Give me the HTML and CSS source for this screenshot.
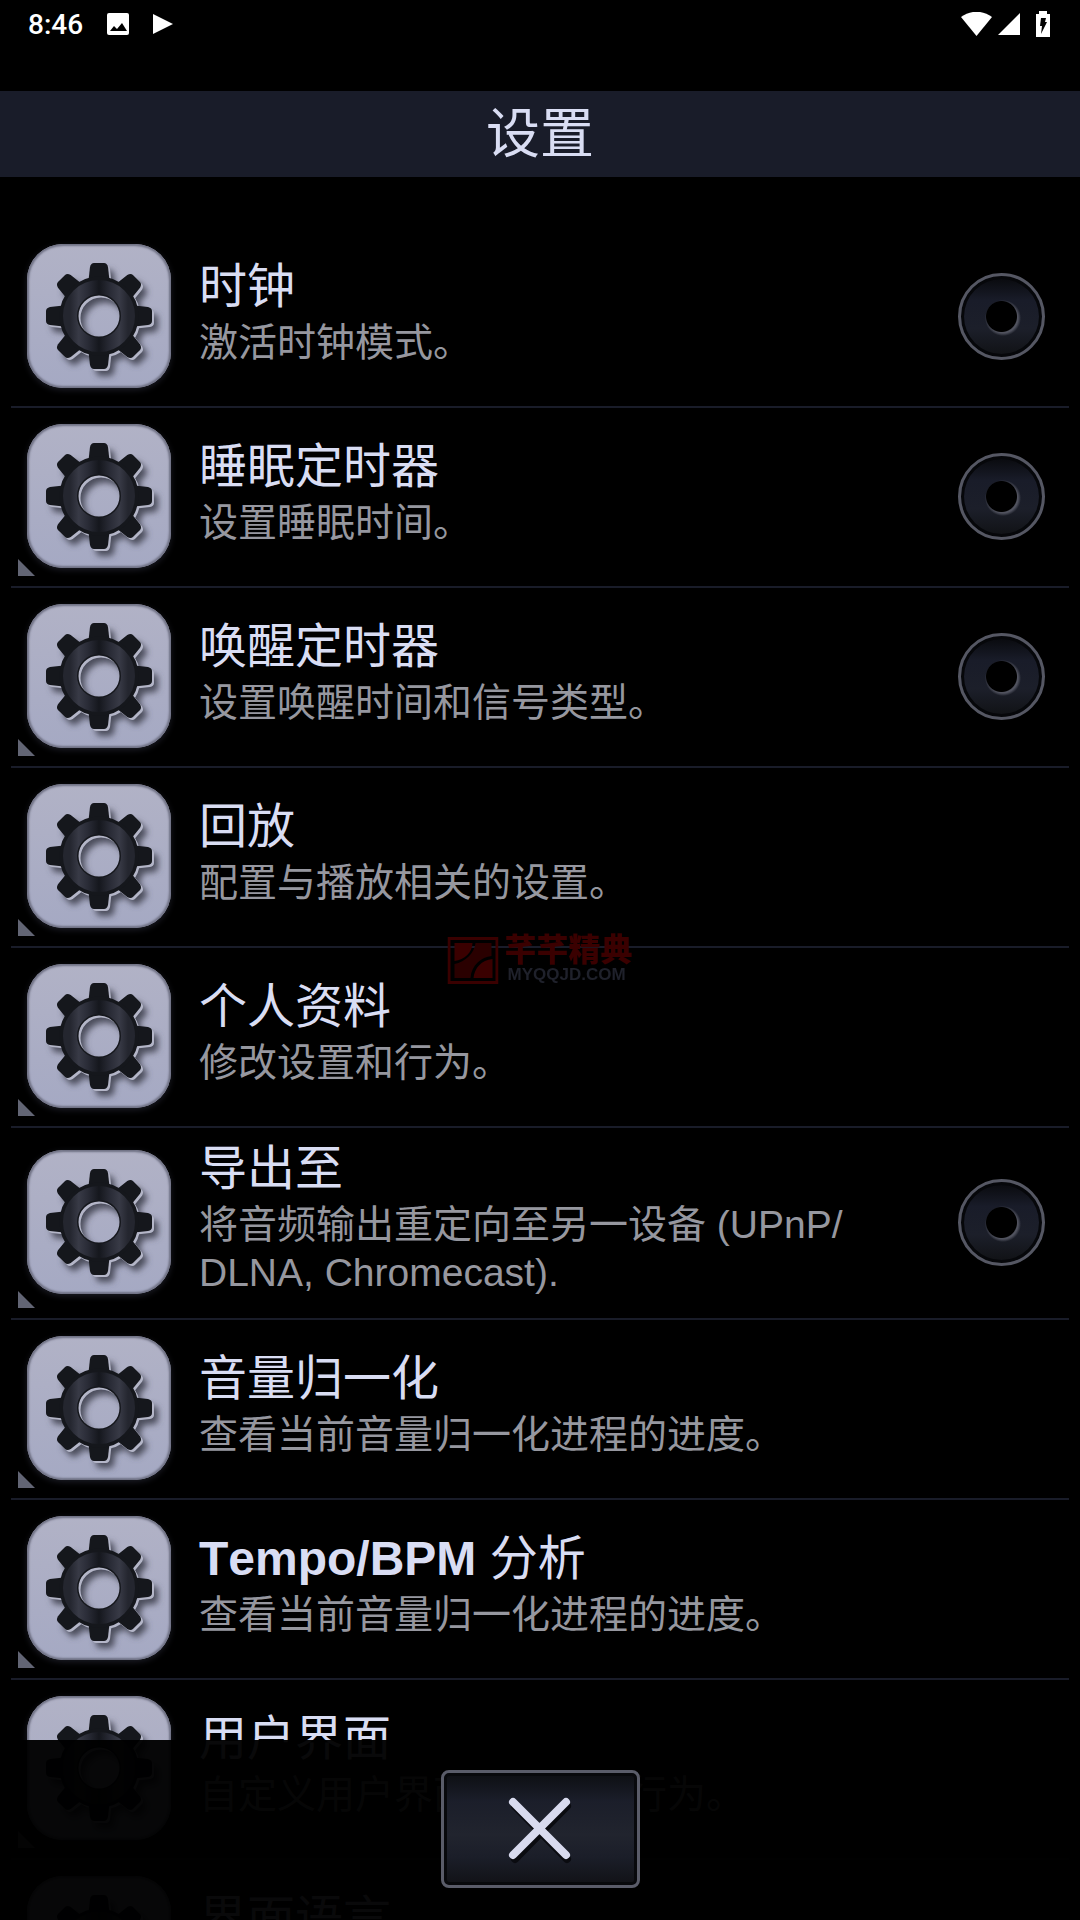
FILE: index.html
```html
<!DOCTYPE html>
<html lang="zh-CN">
<head>
    <meta charset="UTF-8">
    <meta name="viewport" content="width=device-width, initial-scale=1.0">
    <title>设置</title>
    <link rel="stylesheet" href="styles.css">
</head>
<body>

<!-- shared gear icon -->
<svg class="defs" width="0" height="0" aria-hidden="true">
    <defs>
        <linearGradient id="ring" x1="0" y1="0" x2="1" y2="0">
            <stop offset="0" stop-color="#24262f"/>
            <stop offset="0.15" stop-color="#383a46"/>
            <stop offset="0.3" stop-color="#2a2c37"/>
            <stop offset="0.5" stop-color="#15171d"/>
            <stop offset="0.7" stop-color="#2a2c37"/>
            <stop offset="0.85" stop-color="#383a46"/>
            <stop offset="1" stop-color="#24262f"/>
        </linearGradient>
        <filter id="soft" x="-20%" y="-20%" width="150%" height="150%">
            <feGaussianBlur stdDeviation="3"/>
        </filter>
        <g id="gear-shape">
            <path id="tooth" d="M67 19h10q3 0 4 4l2 18H61l2-18q1-4 4-4z"/>
            <use href="#tooth" transform="rotate(45 72 72)"/>
            <use href="#tooth" transform="rotate(90 72 72)"/>
            <use href="#tooth" transform="rotate(135 72 72)"/>
            <use href="#tooth" transform="rotate(180 72 72)"/>
            <use href="#tooth" transform="rotate(225 72 72)"/>
            <use href="#tooth" transform="rotate(270 72 72)"/>
            <use href="#tooth" transform="rotate(315 72 72)"/>
            <circle cx="72" cy="72" r="30" fill="none" stroke-width="19"/>
        </g>
        <symbol id="gear" viewBox="0 0 144 144">
            <use href="#gear-shape" x="6" y="7" fill="#4b4d5c" stroke="#4b4d5c" stroke-width="0" filter="url(#soft)"/>
            <use href="#gear-shape" x="2" y="2" fill="#b4b6c8" stroke="#b4b6c8" stroke-width="0"/>
            <use href="#gear-shape" fill="#15171c" stroke="#15171c" stroke-width="0"/>
            <circle cx="72" cy="72" r="29" fill="none" stroke="url(#ring)" stroke-width="14"/>
        </symbol>
    </defs>
</svg>

<div class="status-bar">
    <span class="time">8:46</span>
    <svg width="22" height="22" viewBox="0 0 22 22"><rect width="22" height="22" rx="2" fill="#fff"/><path d="M3 18l4-5 3 3 5-6 5 8z" fill="#000"/></svg>
    <svg width="20" height="20" viewBox="0 0 20 20"><path d="M0 0l20 10L0 20z" fill="#fff"/></svg>
    <div class="status-right">
        <svg width="31" height="24" viewBox="0 0 31 24"><path d="M0 5C9-2 22-2 31 5L15.500 24z" fill="#fff"/></svg>
        <svg width="22" height="22" viewBox="0 0 22 22"><path d="M22 0v22H0z" fill="#fff"/></svg>
        <svg class="battery" width="14" height="26" viewBox="0 0 14 26"><path d="M3 0h8v3h3v23H0V3h3z" fill="#fff"/><path d="M5 7h5l-1 4h2L5 23l1-8H4z" fill="#000"/></svg>
    </div>
</div>

<header>
    <h1>设置</h1>
</header>

<main>
    <ul class="settings">
        <li class="item">
            <a href="#" class="item-link">
                <svg class="icon"><use href="#gear"/></svg>
                <span class="text">
                    <span class="title" id="clock">时钟</span>
                    <span class="desc">激活时钟模式。</span>
                </span>
            </a>
            <input type="checkbox" class="knob" aria-labelledby="clock">
        </li>
        <li class="item more">
            <a href="#" class="item-link">
                <svg class="icon"><use href="#gear"/></svg>
                <span class="text">
                    <span class="title" id="sleep">睡眠定时器</span>
                    <span class="desc">设置睡眠时间。</span>
                </span>
            </a>
            <input type="checkbox" class="knob" aria-labelledby="sleep">
        </li>
        <li class="item more">
            <a href="#" class="item-link">
                <svg class="icon"><use href="#gear"/></svg>
                <span class="text">
                    <span class="title" id="wake">唤醒定时器</span>
                    <span class="desc">设置唤醒时间和信号类型。</span>
                </span>
            </a>
            <input type="checkbox" class="knob" aria-labelledby="wake">
        </li>
        <li class="item more">
            <a href="#" class="item-link">
                <svg class="icon"><use href="#gear"/></svg>
                <span class="text">
                    <span class="title">回放</span>
                    <span class="desc">配置与播放相关的设置。</span>
                </span>
            </a>
        </li>
        <li class="item more">
            <a href="#" class="item-link">
                <svg class="icon"><use href="#gear"/></svg>
                <span class="text">
                    <span class="title">个人资料</span>
                    <span class="desc">修改设置和行为。</span>
                </span>
            </a>
        </li>
        <li class="item more">
            <a href="#" class="item-link">
                <svg class="icon"><use href="#gear"/></svg>
                <span class="text">
                    <span class="title" id="output">导出至</span>
                    <span class="desc">将音频输出重定向至另一设备 (UPnP/<wbr>DLNA, Chromecast).</span>
                </span>
            </a>
            <input type="checkbox" class="knob" aria-labelledby="output">
        </li>
        <li class="item more">
            <a href="#" class="item-link">
                <svg class="icon"><use href="#gear"/></svg>
                <span class="text">
                    <span class="title">音量归一化</span>
                    <span class="desc">查看当前音量归一化进程的进度。</span>
                </span>
            </a>
        </li>
        <li class="item more">
            <a href="#" class="item-link">
                <svg class="icon"><use href="#gear"/></svg>
                <span class="text">
                    <span class="title"><b>Tempo/BPM</b> 分析</span>
                    <span class="desc">查看当前音量归一化进程的进度。</span>
                </span>
            </a>
        </li>
        <li class="item more">
            <a href="#" class="item-link">
                <svg class="icon"><use href="#gear"/></svg>
                <span class="text">
                    <span class="title">用户界面</span>
                    <span class="desc">自定义用户界面的外观和行为。</span>
                </span>
            </a>
        </li>
        <li class="item more">
            <a href="#" class="item-link">
                <svg class="icon"><use href="#gear"/></svg>
                <span class="text">
                    <span class="title">界面语言</span>
                    <span class="desc">设置界面语言。</span>
                </span>
            </a>
        </li>
    </ul>
</main>

<div class="watermark">
    <svg width="51" height="47" viewBox="0 0 51 47">
        <rect x="1.500" y="1.500" width="48" height="44" fill="none" stroke="#3a0000" stroke-width="3"/>
        <path d="M7 6h18C25 15 17 23 7 24z" fill="#3a0000"/>
        <path d="M28 6h16v13C34 20 24 28 23 41H7V27C18 25 27 16 28 6z" fill="#2a0000"/>
        <path d="M45 22v19H26C27 31 34 23 45 22z" fill="#3a0000"/>
    </svg>
    <div>
        <p class="mark-name">芊芊精典</p>
        <p class="mark-url">MYQQJD.COM</p>
    </div>
</div>

<footer>
    <button type="button" class="close" aria-label="关闭">
        <svg width="70" height="70" viewBox="0 0 70 70">
            <path d="M10 12l52 53M62 12L10 65" stroke="#0a0b10" stroke-width="8" stroke-linecap="round"/>
            <path d="M8 8l53 53M61 8L8 61" stroke="#d8daee" stroke-width="8" stroke-linecap="round"/>
        </svg>
    </button>
</footer>

</body>
</html>
```
FILE: styles.css
```css
* {
    box-sizing: border-box;
}

body {
    margin: 0;
    height: 100vh;
    display: flex;
    flex-direction: column;
    overflow: hidden;
    background-color: #000;
    color: #d9ddf3;
    font-family: "Liberation Sans", "Noto Sans CJK SC", sans-serif;
}

.defs {
    position: absolute;
}

.status-bar {
    display: flex;
    align-items: center;
    gap: 24px;
    height: 48px;
    margin-bottom: 43px;
    padding: 0 30px 0 28px;
    flex-shrink: 0;
    color: #fff;
}

.time {
    font-family: Roboto, sans-serif;
    font-size: 28px;
    font-weight: 500;
}

.status-right {
    display: flex;
    align-items: center;
    gap: 6px;
    margin-left: auto;
}

.battery {
    margin-left: 10px;
}

header {
    flex-shrink: 0;
    background-color: #191c29;
    text-align: center;
}

h1 {
    margin: 0;
    font-size: 54px;
    font-weight: normal;
    line-height: 86px;
}

main {
    flex: 1;
    min-height: 0;
    padding: 51px 11px 0;
    overflow-y: auto;
    scrollbar-width: none;
}

.settings {
    margin: 0;
    padding: 0;
    list-style: none;
}

.item {
    position: relative;
    display: flex;
    align-items: center;
    padding: 16px 24px 18px 16px;
    border-bottom: 2px solid #191c29;
}

/* corner mark: the entry opens a sub menu */
.more::before {
    content: "";
    position: absolute;
    left: 7px;
    bottom: 10px;
    width: 17px;
    height: 17px;
    background-color: #626574;
    clip-path: polygon(0 0, 100% 100%, 0 100%);
}

.item-link {
    display: flex;
    flex: 1;
    align-items: center;
    gap: 28px;
    color: inherit;
    text-decoration: none;
}

.icon {
    width: 144px;
    height: 144px;
    flex-shrink: 0;
    border-radius: 36px;
    background: linear-gradient(#b1b2c6, #a5a9c3);
    box-shadow: inset 0 0 2px 2px #6f7184, 0 2px 6px #1c1d26;
}

.text {
    display: flex;
    flex-direction: column;
    gap: 7px;
    padding: 0 16px 3px 0;
}

.title {
    font-size: 48px;
    line-height: 50px;
    font-kerning: none;
}

.desc {
    color: #96979f;
    font-size: 39px;
    line-height: 48px;
}

.knob {
    appearance: none;
    width: 87px;
    height: 87px;
    margin: 0;
    flex-shrink: 0;
    border: 3px solid #555763;
    border-radius: 50%;
    background:
        radial-gradient(circle at 50% 50%, #000 15px, transparent 16px),
        radial-gradient(circle at 42px 42px, #50525e 15px, transparent 18px),
        linear-gradient(#08090c, #191c29 30%, #1c1f2a 65%, #101114);
    box-shadow: inset 0 0 0 3px #06070a;
}

.watermark {
    position: fixed;
    top: 50%;
    left: 50%;
    display: flex;
    align-items: center;
    gap: 6px;
    transform: translate(-50%, -50%);
    pointer-events: none;
}

.watermark p {
    margin: 0;
}

.mark-name {
    color: #3a0000;
    font-size: 32px;
    font-weight: 900;
    line-height: 30px;
}

.mark-url {
    padding-left: 3px;
    color: #1f212b;
    font-size: 17px;
    font-weight: bold;
    line-height: 20px;
}

footer {
    position: fixed;
    right: 0;
    bottom: 0;
    left: 0;
    display: flex;
    justify-content: center;
    padding: 30px 0 32px;
    background-color: rgba(0, 0, 0, 0.96);
}

.close {
    display: flex;
    align-items: center;
    justify-content: center;
    width: 199px;
    height: 118px;
    padding: 0;
    border: 3px solid #5a5c69;
    border-radius: 8px;
    background: linear-gradient(#0d0e12, #1b1e2a 25%, #21242e 55%, #1b1e29 75%, #111216);
    box-shadow: inset 0 0 0 3px #08090c;
}
```
